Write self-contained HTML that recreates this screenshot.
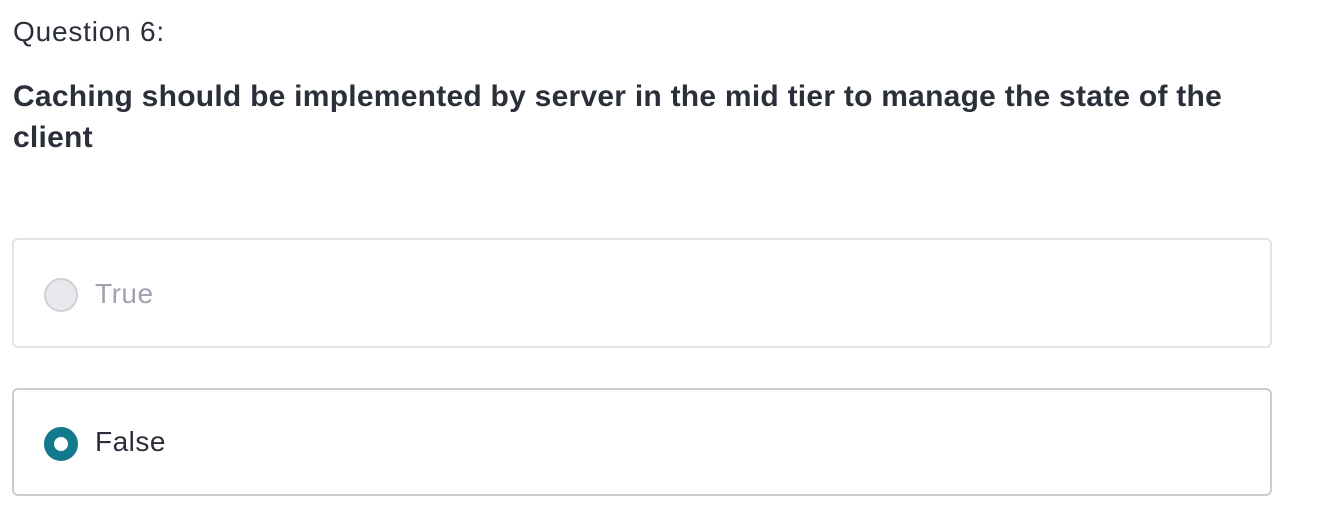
<!DOCTYPE html>
<html><head><style>
body{margin:0;background:#fff;width:1344px;height:526px;overflow:hidden;font-family:"Liberation Sans",sans-serif;color:#2a2f3a}
.q{position:absolute;left:13px;top:16px;font-size:28px;letter-spacing:0.8px;color:#2a2f3a}
.t{position:absolute;left:13px;top:76px;width:1320px;font-size:30px;font-weight:bold;line-height:41px;letter-spacing:0.25px;color:#2a2f3a}
.box{position:absolute;left:12px;width:1260px;border-radius:6px;box-sizing:border-box}
.r{position:absolute;left:30px;width:34px;height:34px;border-radius:50%;box-sizing:border-box}
.l{position:absolute;left:81px;font-size:28px;letter-spacing:0.5px}
</style></head><body>
<div class="q">Question 6:</div>
<div class="t">Caching should be implemented by server in the mid tier to manage the state of the<br>client</div>
<div class="box" style="top:238px;height:110px;border:2px solid #e3e3e3">
 <div class="r" style="top:38px;background:#e8e9ec;border:2px solid #cfd0d3"></div>
 <div class="l" style="top:38px;color:#9ea3ae">True</div>
</div>
<div class="box" style="top:388px;height:108px;border:2px solid #cdcdcd">
 <div class="r" style="top:37px;background:#fff;border:10px solid #127a8c"></div>
 <div class="l" style="top:36px;color:#2a2f3a">False</div>
</div>
</body></html>
